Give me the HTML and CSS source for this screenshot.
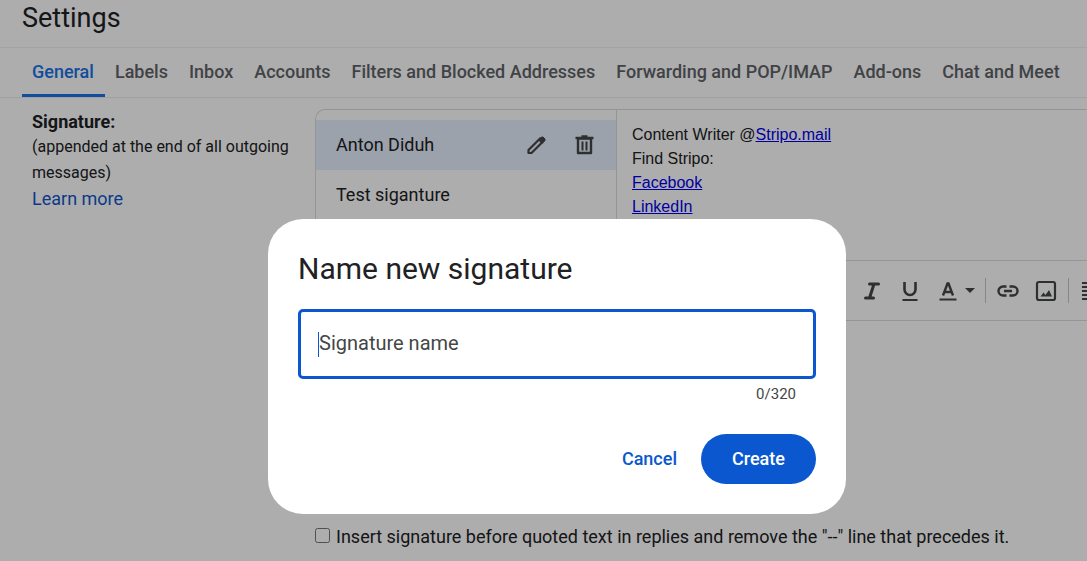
FILE: index.html
```html
<!DOCTYPE html>
<html lang="en">
<head>
    <meta charset="UTF-8">
    <meta name="viewport" content="width=device-width, initial-scale=1.0">
    <title>Settings</title>
    <link rel="stylesheet" href="styles.css">
</head>
<body>

<div class="settings">
    <h1>Settings</h1>

    <nav class="tabs">
        <a href="#general" class="tab active">General</a>
        <a href="#labels" class="tab">Labels</a>
        <a href="#inbox" class="tab">Inbox</a>
        <a href="#accounts" class="tab">Accounts</a>
        <a href="#filters" class="tab">Filters and Blocked Addresses</a>
        <a href="#forwarding" class="tab">Forwarding and POP/IMAP</a>
        <a href="#addons" class="tab">Add-ons</a>
        <a href="#chat" class="tab">Chat and Meet</a>
    </nav>

    <div class="row">
        <div class="info">
            <h2>Signature:</h2>
            <p>(appended at the end of all outgoing messages)</p>
            <a href="#learn">Learn more</a>
        </div>

        <div class="content">
            <div class="signature-box">
                <ul class="signature-list">
                    <li class="selected">
                        <span>Anton Diduh</span>
                        <button class="icon-button" aria-label="Edit name">
                            <svg width="24" height="24" viewBox="0 0 24 24" fill="none" stroke="currentColor" stroke-width="2.2" stroke-linejoin="round"><path d="M4.5 17L16 5.500l3 3L7.500 20h-3z"/><path d="M14.500 7l3-3h1.500l2 2v1.500l-3 3z" fill="currentColor" stroke-width="1"/></svg>
                        </button>
                        <button class="icon-button" aria-label="Delete">
                            <svg width="24" height="24" viewBox="0 0 24 24" fill="none" stroke="currentColor" stroke-width="2.4" stroke-linejoin="round"><path d="M6 5.500v14.500h13V5.500z"/><path d="M3.500 5h18M9.500 3.500h6"/><path d="M10.500 8.500v9M14.500 8.500v9" stroke-width="2"/></svg>
                        </button>
                    </li>
                    <li><span>Test siganture</span></li>
                </ul>
                <div class="editor">
                    <div class="editor-text">
                        Content Writer @<a href="#stripo">Stripo.mail</a><br>
                        Find Stripo:<br>
                        <a href="#facebook">Facebook</a><br>
                        <a href="#linkedin">LinkedIn</a>
                    </div>
                    <div class="toolbar">
                        <button class="tool" aria-label="Italic">
                            <svg width="24" height="24" viewBox="0 0 24 24" fill="none" stroke="currentColor" stroke-width="3" stroke-linecap="round"><path d="M9.500 5h9M5.500 19h8M14 5l-4.500 14"/></svg>
                        </button>
                        <button class="tool" aria-label="Underline">
                            <svg width="24" height="24" viewBox="0 0 24 24" fill="none" stroke="currentColor" stroke-width="2.6"><path d="M6.500 3v7.500a5.500 5.500 0 0 0 11 0V3"/><path d="M4.500 21h15" stroke-width="2"/></svg>
                        </button>
                        <button class="tool color" aria-label="Text color">
                            <svg width="24" height="24" viewBox="0 0 24 24" fill="none" stroke="currentColor" stroke-width="2.4"><path d="M7 16.500l4.500-12h1l4.500 12M8.500 13h7"/><path d="M3.500 20.500h17" stroke-width="2"/></svg>
                            <svg width="10" height="6" viewBox="0 0 10 6"><path d="M0 0h10L5 5z" fill="currentColor"/></svg>
                        </button>
                        <span class="separator"></span>
                        <button class="tool" aria-label="Link">
                            <svg width="24" height="24" viewBox="0 0 24 24" fill="none" stroke="currentColor" stroke-width="2.4"><path d="M10.500 7.500H7a4.500 4.500 0 0 0 0 9h3.500M13.500 7.500H17a4.500 4.500 0 0 1 0 9h-3.500M8 12h8"/></svg>
                        </button>
                        <button class="tool" aria-label="Insert image">
                            <svg width="24" height="24" viewBox="0 0 24 24" fill="none" stroke="currentColor" stroke-width="2.2"><rect x="3" y="3" width="18" height="18" rx="2"/><path d="M6.500 17.500l3-4 2 2.500 3.500-5 3 6.500z" fill="currentColor" stroke="none"/></svg>
                        </button>
                        <span class="separator"></span>
                        <button class="tool align" aria-label="Align">
                            <svg width="24" height="24" viewBox="0 0 24 24" fill="none" stroke="currentColor" stroke-width="2"><path d="M3 4h18M3 8h12M3 12h18M3 16h12M3 20h18"/></svg>
                        </button>
                    </div>
                </div>
            </div>

            <label class="insert">
                <input type="checkbox">
                Insert signature before quoted text in replies and remove the "--" line that precedes it.
            </label>
        </div>
    </div>
</div>

<div class="overlay">
    <form class="dialog" role="dialog" aria-labelledby="dialogTitle">
        <h2 id="dialogTitle">Name new signature</h2>
        <div class="field">
            <span class="caret"></span>
            <input type="text" id="signatureName" placeholder="Signature name" aria-label="Signature name" maxlength="320">
        </div>
        <div class="counter">0/320</div>
        <div class="actions">
            <button type="button" class="cancel">Cancel</button>
            <button type="button" class="create">Create</button>
        </div>
    </form>
</div>

</body>
</html>
```
FILE: styles.css
```css
* {
    box-sizing: border-box;
}
body {
    font-family: Roboto, "Liberation Sans", sans-serif;
    font-size: 18px;
    margin: 0;
    color: #202124;
    background-color: #ffffff;
    overflow: hidden;
}
button {
    font-family: inherit;
    border: none;
    background: none;
    padding: 0;
    cursor: pointer;
}
svg {
    display: block;
}
h1 {
    margin: 0;
    padding: 1px 22px 11px;
    font-size: 27px;
    font-weight: 400;
    line-height: 35px;
    border-bottom: 1px solid #f0f0f0;
}

/* Tabs */
.tabs {
    display: flex;
    padding: 0 22px;
    height: 50px;
    border-bottom: 1px solid #ececec;
    white-space: nowrap;
}
.tab {
    padding: 0 11px 0 10px;
    line-height: 48px;
    font-weight: 500;
    color: #5f6368;
    text-decoration: none;
}
.tab.active {
    color: #1a73e8;
    border-bottom: 3px solid #1a73e8;
}

/* Signature row */
.row {
    display: grid;
    grid-template-columns: 283px 1fr;
    padding: 11px 0 0 32px;
}
.info {
    padding-right: 24px;
    line-height: 26px;
}
.info h2 {
    margin: 0;
    font-size: 18px;
    font-weight: 700;
    line-height: 25px;
}
.info p {
    margin: 0;
    font-size: 16px;
}
.info a {
    color: #1155cc;
    text-decoration: none;
}
.signature-box {
    display: flex;
    height: 212px;
    border: 1px solid #dadce0;
    border-right: none;
    border-radius: 10px 0 0 0;
}
.signature-list {
    width: 301px;
    margin: 0;
    padding: 10px 0 0;
    list-style: none;
    border-right: 1px solid #dadce0;
}
.signature-list li {
    display: flex;
    align-items: center;
    height: 50px;
    padding: 0 20px;
    gap: 24px;
}
.signature-list span {
    flex: 1;
    padding-bottom: 2px;
}
.signature-list .selected {
    background-color: #e5effd;
}
.icon-button, .tool {
    color: #444746;
}
.editor {
    flex: 1;
    display: flex;
    flex-direction: column;
    min-width: 0;
}
.editor-text {
    flex: 1;
    padding: 13px 15px;
    font-family: "Liberation Sans", Arial, sans-serif;
    font-size: 16px;
    line-height: 24px;
}
.editor-text a {
    color: #0000ee;
}
.toolbar {
    display: flex;
    align-items: center;
    height: 60px;
    padding-left: 243px;
    gap: 14px;
    border-top: 1px solid #dadce0;
    overflow: hidden;
}
.tool, .separator {
    flex-shrink: 0;
}
.tool.color {
    display: flex;
    align-items: center;
    gap: 5px;
}
.separator {
    width: 1px;
    height: 25px;
    margin: 0 -4px;
    background-color: #c4c7c5;
}
.insert {
    display: flex;
    align-items: center;
    margin-top: 204px;
    gap: 6px;
    line-height: 24px;
    white-space: nowrap;
}
.insert input {
    width: 15px;
    height: 15px;
    margin: 0 0 4px;
}

/* Dialog */
.overlay {
    position: fixed;
    inset: 0;
    display: flex;
    align-items: center;
    justify-content: center;
    padding: 172px 0 0 27px;
    background-color: rgba(0, 0, 0, 0.32);
}
.dialog {
    width: 578px;
    padding: 30px;
    border-radius: 35px;
    background-color: #ffffff;
}
.dialog h2 {
    margin: 0 0 20px;
    font-size: 30px;
    font-weight: 400;
    line-height: 40px;
}
.field {
    display: flex;
    align-items: center;
    height: 70px;
    padding: 0 17px;
    border: 3px solid #0b57d0;
    border-radius: 5px;
}
.field input {
    flex: 1;
    border: none;
    outline: none;
    padding: 0 0 2px;
    font-family: inherit;
    font-size: 20px;
    background: none;
}
.field input::placeholder {
    color: #444746;
}
.caret {
    width: 1px;
    height: 25px;
    background-color: #0b57d0;
}
.counter {
    padding: 5px 20px 0;
    font-size: 15px;
    line-height: 20px;
    text-align: right;
    color: #444746;
}
.actions {
    display: flex;
    justify-content: flex-end;
    margin-top: 30px;
    gap: 24px;
}
.actions button {
    height: 50px;
    padding-bottom: 2px;
    font-size: 18px;
    font-weight: 500;
}
.cancel {
    color: #0b57d0;
}
.actions .create {
    width: 115px;
    border-radius: 25px;
    color: #ffffff;
    background-color: #0b57d0;
}
```
